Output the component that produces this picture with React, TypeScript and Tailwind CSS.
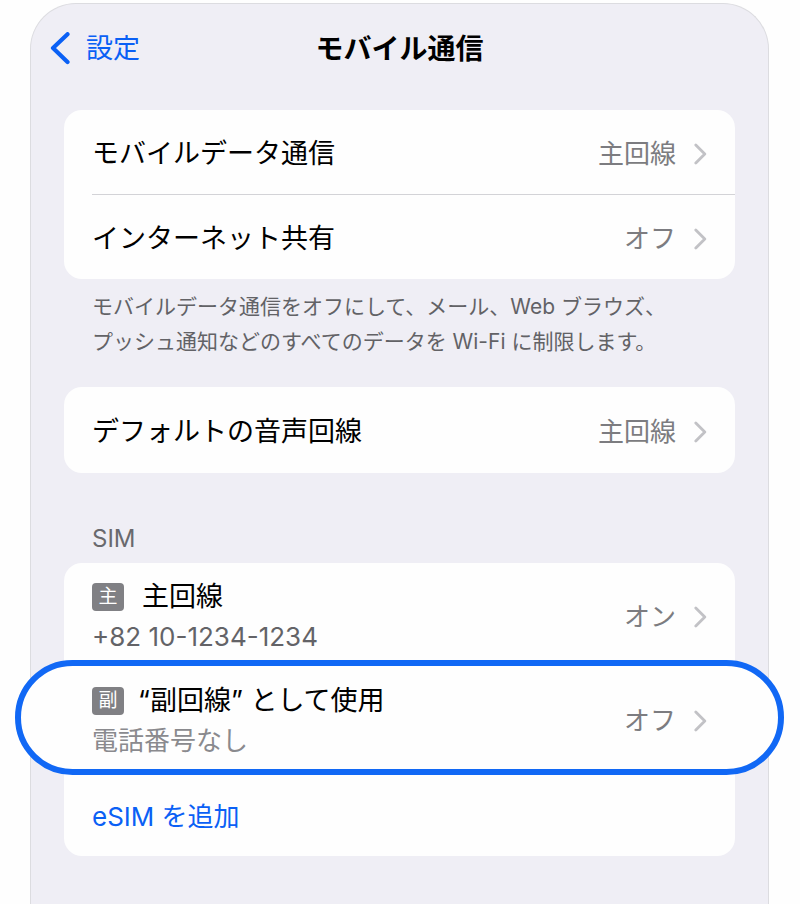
import type { ReactNode } from "react";

type LinkRowProps = {
  label: string;
  value: string;
};

type SimRowProps = {
  badge: string;
  name: string;
  detail: string;
  value: string;
  quoted?: boolean;
};

function Chevron() {
  return (
    <svg
      width="13"
      height="22"
      viewBox="0 0 13 22"
      fill="none"
      aria-hidden="true"
      className="shrink-0 text-[#c2c2c6]"
    >
      <path
        d="M1.8 2 10.8 11 1.8 20"
        stroke="currentColor"
        strokeWidth="2.8"
        strokeLinecap="round"
        strokeLinejoin="round"
      />
    </svg>
  );
}

function RowValue({ value }: { value: string }) {
  return (
    <span className="flex shrink-0 items-center gap-[18px] text-[26px] text-[#7c7c80]">
      {value}
      <Chevron />
    </span>
  );
}

function Card({ children }: { children: ReactNode }) {
  return <div className="rounded-[18px] bg-[#fefefe]">{children}</div>;
}

function LinkRow({ label, value }: LinkRowProps) {
  return (
    <button
      type="button"
      className="flex w-full items-center justify-between pt-6 pr-7 pb-5 text-left text-[27px] leading-10"
    >
      <span>{label}</span>
      <RowValue value={value} />
    </button>
  );
}

function SimRow({ badge, name, detail, value, quoted = false }: SimRowProps) {
  return (
    <button type="button" className="flex w-full items-center justify-between text-left leading-10">
      <span className="block">
        <span className={`flex items-center text-[27px] ${quoted ? "gap-[14px]" : "gap-[18px]"}`}>
          <span className="flex h-7 w-8 items-center justify-center rounded bg-[#808084] text-[19px] text-white">
            {badge}
          </span>
          {name}
        </span>
        <span className={`block text-[26px] ${quoted ? "text-[#8a8a8e]" : "text-[#636367]"}`}>
          {detail}
        </span>
      </span>
      <RowValue value={value} />
    </button>
  );
}

export default function App() {
  return (
    <div className="flex min-h-screen flex-col overflow-x-hidden bg-[#fefefe] pt-[3px] pr-[31px] pl-[30px] font-['Inter','Noto_Sans_CJK_JP',sans-serif] text-black">
      <main className="flex-1 rounded-t-[46px] border border-b-0 border-[#dcdce0] bg-[#efeef5] px-[33px]">
        <header className="-mx-[14px] grid grid-cols-[1fr_auto_1fr] items-center pt-[25px] pb-[41px] leading-10">
          <button
            type="button"
            className="flex items-center gap-4 justify-self-start text-[27px] text-[#0a60f5]"
          >
            <svg width="20" height="34" viewBox="0 0 20 34" fill="none" aria-hidden="true">
              <path
                d="M17.5 2.2 3 16 17.5 30"
                stroke="currentColor"
                strokeWidth="4.2"
                strokeLinecap="round"
                strokeLinejoin="round"
              />
            </svg>
            設定
          </button>
          <h1 className="text-[28px] font-bold">モバイル通信</h1>
        </header>

        <Card>
          <div className="ml-7 border-b border-[#d3d3d7]">
            <LinkRow label="モバイルデータ通信" value="主回線" />
          </div>
          <div className="ml-7">
            <LinkRow label="インターネット共有" value="オフ" />
          </div>
        </Card>
        <p className="mt-[10px] pl-7 text-[21px] leading-[35px] text-[#626266]">
          モバイルデータ通信をオフにして、メール、Web ブラウズ、
          <br />
          プッシュ通知などのすべてのデータを Wi-Fi に制限します。
        </p>

        <div className="mt-7">
          <Card>
            <div className="ml-7 py-px">
              <LinkRow label="デフォルトの音声回線" value="主回線" />
            </div>
          </Card>
        </div>

        <h2 className="mt-[46px] mb-1 pl-7 text-[24px] leading-10 text-[#69696d]">SIM</h2>
        <Card>
          <div className="px-7 pt-[14px] pb-[3px]">
            <SimRow badge="主" name="主回線" detail="+82 10-1234-1234" value="オン" />
          </div>
          {/* highlighted row spills past the card and the panel */}
          <div className="relative -mx-[49px] rounded-full border-[6px] border-[#1168f5] bg-[#fefefe] px-[71px] pt-[15px] pb-2">
            <SimRow badge="副" name="“副回線” として使用" detail="電話番号なし" value="オフ" quoted />
          </div>
          <button
            type="button"
            className="block w-full px-7 pt-[22px] pb-[19px] text-left text-[26px] leading-10 text-[#0a60f5]"
          >
            eSIM を追加
          </button>
        </Card>
      </main>
    </div>
  );
}
